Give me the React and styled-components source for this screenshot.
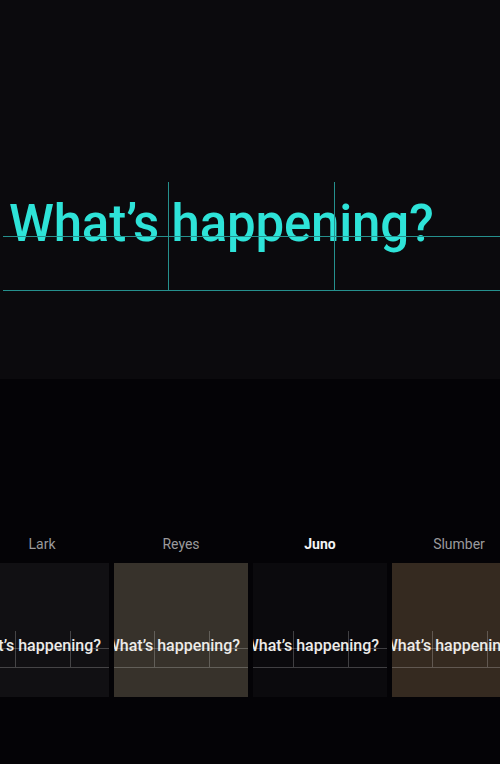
import styled, { createGlobalStyle } from "styled-components"

const GlobalStyle = createGlobalStyle`
    html, body {
        margin: 0;
        padding: 0;
        background: #040306;
    }
    body {
        font-family: Roboto, "Noto Sans", sans-serif;
        -webkit-font-smoothing: antialiased;
    }
`

const themes = [
    { name: "Lark", bg: "#111013" },
    { name: "Reyes", bg: "#37322b" },
    { name: "Juno", bg: "#0b0a0d", active: true },
    { name: "Slumber", bg: "#352a20" },
]

const Screen = styled.div`
    width: 500px;
    height: 764px;
    overflow: hidden;
    background: #040306;
`

const Preview = styled.section`
    position: relative;
    height: 379px;
    background: #0b0a0d;
    overflow: hidden;
`

const Headline = styled.h1`
    margin: 0;
    padding: 194px 0 0 9px;
    font-size: 51px;
    line-height: 60px;
    font-weight: 500;
    letter-spacing: -0.2px;
    color: #2ee3d8;
    white-space: nowrap;
`

// guide lines drawn over the type
const Guide = styled.span`
    position: absolute;
    background: ${({color}) => color};
    ${({vertical, at, from, to}) => vertical
        ? `left: ${at}px; top: ${from}px; width: 1px; height: ${to - from}px;`
        : `top: ${at}px; left: ${from}px; height: 1px; width: ${to - from}px;`}
`

const Picker = styled.section`
    padding-top: 157px;
`

const Strip = styled.div`
    display: flex;
    gap: 5px;
    margin-left: -25px;
`

const Option = styled.div`
    display: flex;
    flex-direction: column;
    align-items: center;
    gap: 11px;
    flex: 0 0 134px;
`

const Label = styled.span`
    font-size: 14px;
    line-height: 16px;
    font-weight: ${({active}) => active ? 700 : 400};
    color: ${({active}) => active ? "#f4f4f4" : "#9b9a9c"};
`

const Swatch = styled.div`
    position: relative;
    width: 134px;
    height: 134px;
    background: ${({bg}) => bg};
    overflow: hidden;
    display: flex;
    justify-content: flex-end;
`

const MiniText = styled.span`
    padding: 73px 8px 0 0;
    font-size: 16px;
    line-height: 20px;
    font-weight: 500;
    color: #ecebe8;
    white-space: nowrap;
`

const ThemeCard = ({theme:{name, bg, active}}) => {
    const line = "rgba(255,255,255,0.22)"
    return(
        <Option>
            <Label active={active}>{name}</Label>
            <Swatch bg={bg}>
                <MiniText>What’s happening?</MiniText>
                <Guide color={line} at={85} from={0} to={134} />
                <Guide color={line} at={104} from={0} to={134} />
                <Guide color={line} vertical at={40} from={68} to={104} />
                <Guide color={line} vertical at={95} from={68} to={104} />
            </Swatch>
        </Option>
    )
}

export default function App() {
    const teal = "#25908d"
    return(
        <Screen>
            <GlobalStyle />
            <Preview>
                <Headline>What’s happening?</Headline>
                <Guide color={teal} at={236} from={3} to={500} />
                <Guide color={teal} at={290} from={3} to={500} />
                <Guide color={teal} vertical at={168} from={182} to={291} />
                <Guide color={teal} vertical at={334} from={182} to={291} />
            </Preview>
            <Picker>
                <Strip>
                    {themes.map(t => <ThemeCard key={t.name} theme={t} />)}
                </Strip>
            </Picker>
        </Screen>
    )
}
